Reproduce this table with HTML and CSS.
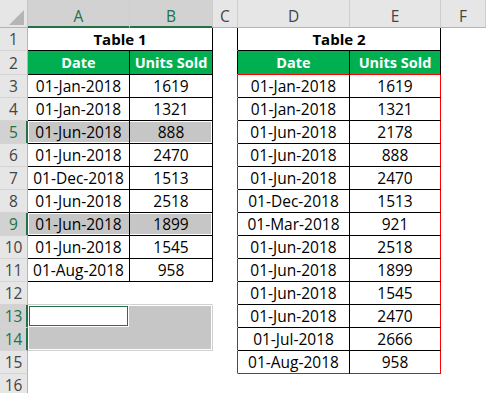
FILE: index.html
```html
<!DOCTYPE html>
<html>
<head>
<meta charset="utf-8">
<link rel="stylesheet" href="styles.css">
</head>
<body>
<div class="sheet">
  <div class="corner"><svg class="tri" width="27" height="27" viewBox="0 0 27 27"><polygon points="9,25 24,25 24,10" fill="#b5b5b5"/></svg></div>
  <div class="ch sel">A</div><div class="ch sel">B</div><div class="ch">C</div><div class="ch">D</div><div class="ch">E</div><div class="ch">F</div>

  <div class="rh">1</div><div class="c k title span2">Table 1</div><div class="c rk"></div><div class="c k title span2">Table 2</div><div class="c"></div>
  <div class="rh">2</div><div class="c k hd">Date</div><div class="c k hd">Units Sold</div><div class="c rk"></div><div class="c k hd br">Date</div><div class="c k hd br">Units Sold</div><div class="c"></div>

  <div class="rh">3</div><div class="c k">01-Jan-2018</div><div class="c k">1619</div><div class="c rr"></div><div class="c k">01-Jan-2018</div><div class="c k rr">1619</div><div class="c"></div>
  <div class="rh">4</div><div class="c k">01-Jan-2018</div><div class="c k">1321</div><div class="c rr"></div><div class="c k">01-Jan-2018</div><div class="c k rr">1321</div><div class="c"></div>
  <div class="rh sel">5</div><div class="c k hl hl-l">01-Jun-2018</div><div class="c k hl hl-r">888</div><div class="c rr"></div><div class="c k">01-Jun-2018</div><div class="c k rr">2178</div><div class="c"></div>
  <div class="rh">6</div><div class="c k">01-Jun-2018</div><div class="c k">2470</div><div class="c rr"></div><div class="c k">01-Jun-2018</div><div class="c k rr">888</div><div class="c"></div>
  <div class="rh">7</div><div class="c k">01-Dec-2018</div><div class="c k">1513</div><div class="c rr"></div><div class="c k">01-Jun-2018</div><div class="c k rr">2470</div><div class="c"></div>
  <div class="rh">8</div><div class="c k">01-Jun-2018</div><div class="c k">2518</div><div class="c rr"></div><div class="c k">01-Dec-2018</div><div class="c k rr">1513</div><div class="c"></div>
  <div class="rh sel">9</div><div class="c k hl hl-l">01-Jun-2018</div><div class="c k hl hl-r">1899</div><div class="c rr"></div><div class="c k">01-Mar-2018</div><div class="c k rr">921</div><div class="c"></div>
  <div class="rh">10</div><div class="c k">01-Jun-2018</div><div class="c k">1545</div><div class="c rr"></div><div class="c k">01-Jun-2018</div><div class="c k rr">2518</div><div class="c"></div>
  <div class="rh">11</div><div class="c k">01-Aug-2018</div><div class="c k">958</div><div class="c rr"></div><div class="c k">01-Jun-2018</div><div class="c k rr">1899</div><div class="c"></div>
  <div class="rh">12</div><div class="c gb"></div><div class="c gb"></div><div class="c rr"></div><div class="c k">01-Jun-2018</div><div class="c k rr">1545</div><div class="c"></div>
  <div class="rh sel">13</div>
  <div class="selblock"><div class="active"></div></div>
  <div class="c rr"></div><div class="c k">01-Jun-2018</div><div class="c k rr">2470</div><div class="c"></div>
  <div class="rh sel">14</div><div class="c rr"></div><div class="c k">01-Jul-2018</div><div class="c k rr">2666</div><div class="c"></div>
  <div class="rh">15</div><div class="c"></div><div class="c"></div><div class="c rr"></div><div class="c k br">01-Aug-2018</div><div class="c k rr br">958</div><div class="c"></div>
  <div class="rh">16</div><div class="c"></div><div class="c"></div><div class="c"></div><div class="c"></div><div class="c"></div><div class="c"></div>
</div>
</body>
</html>
```
FILE: styles.css
```css
* { box-sizing: border-box; }
html, body { margin: 0; padding: 0; background: #fff; }
body {
  width: 486px;
  height: 393px;
  overflow: hidden;
  font-family: "Open Sans", "Liberation Sans", sans-serif;
  font-size: 15.5px;
  color: #000;
}
.sheet {
  display: grid;
  grid-template-columns: 28px 102px 83px 25px 112px 91px 1fr;
  grid-template-rows: 28px 23px 24px repeat(14, 23px);
}
.c, .ch, .rh {
  display: flex;
  align-items: flex-end;
  justify-content: center;
  line-height: 22px;
  white-space: nowrap;
  overflow: hidden;
  border-right: 1px solid transparent;
  border-bottom: 1px solid transparent;
}
.corner, .ch, .rh {
  background: #e6e6e6;
  color: #444;
}
.corner {
  border-right: 1px solid #c4c4c4;
  border-bottom: 1px solid #b4b4b4;
}
.tri { display: block; }
.ch {
  border-right-color: #cdcdcd;
  border-bottom-color: #b4b4b4;
}
.rh {
  border-right-color: #b4b4b4;
  border-bottom-color: #d4d4d4;
}
.ch.sel {
  background: #d2d2d2;
  color: #217346;
  border-bottom-color: #217346;
  box-shadow: inset 0 -1px 0 #217346;
}
.rh.sel {
  background: #d2d2d2;
  color: #217346;
  border-right-color: #217346;
  box-shadow: inset -1px 0 0 #217346;
}
.span2 { grid-column: span 2; }
.title { font-weight: 700; font-size: 15px; }
.hd {
  background: #00b050;
  color: #fff;
  font-weight: 700;
  font-size: 14.5px;
}
.k { border-right-color: #000; border-bottom-color: #000; }
.rk { border-right-color: #000; }
.rr { border-right-color: #f00; }
.br { border-bottom-color: #f00; }
.gb { border-bottom-color: #d0d0d0; }
.hl { background: #c6c6c6; }
.hl-l { box-shadow: inset 1px 1px 0 #fff, inset 0 -1px 0 #fff; }
.hl-r { box-shadow: inset -1px 1px 0 #fff, inset 0 -1px 0 #fff; }
.selblock {
  grid-column: span 2;
  grid-row: span 2;
  display: grid;
  grid-template-columns: 101px 1fr;
  grid-template-rows: 22px 1fr;
  background: #c6c6c6;
  border-right: 1px solid #d0d0d0;
  border-bottom: 1px solid #d0d0d0;
  box-shadow: inset 0 0 0 1px #fff;
}
.active {
  background: #fff;
  box-shadow: inset 0 0 0 1px #fff, inset 0 0 0 2px #217346;
}
```
